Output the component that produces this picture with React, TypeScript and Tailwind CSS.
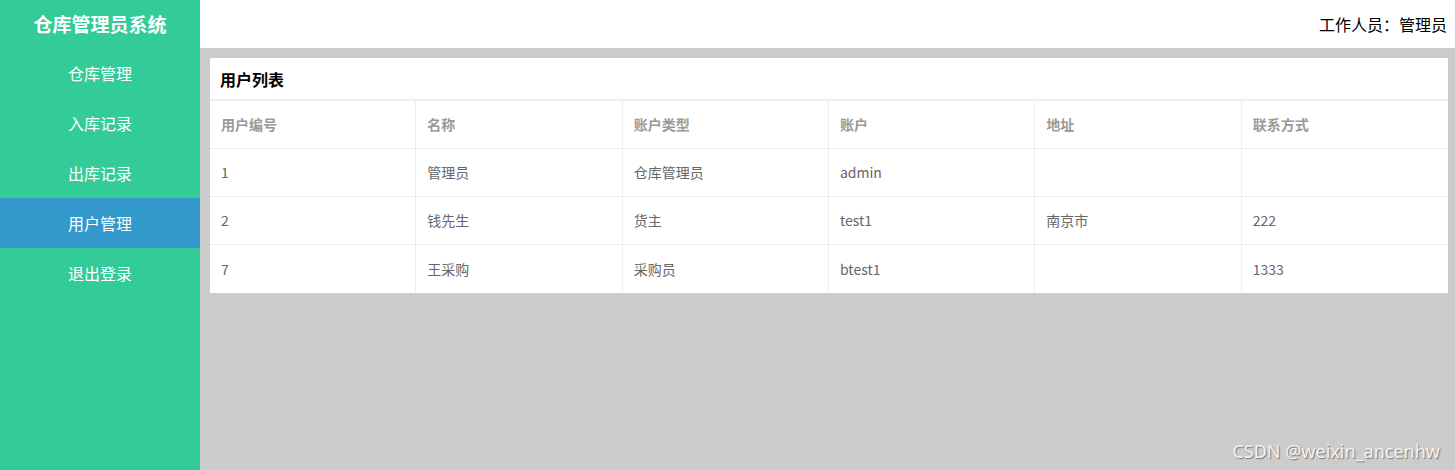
const menu = ["仓库管理", "入库记录", "出库记录", "用户管理", "退出登录"];

const columns = ["用户编号", "名称", "账户类型", "账户", "地址", "联系方式"];

const users = [
  ["1", "管理员", "仓库管理员", "admin", "", ""],
  ["2", "钱先生", "货主", "test1", "南京市", "222"],
  ["7", "王采购", "采购员", "btest1", "", "1333"],
];

const App = () => {
  return (
    <div
      className="flex h-screen relative"
      style={{ fontFamily: '"Noto Sans CJK SC", "Noto Sans", sans-serif' }}
    >
      {/* sidebar */}
      <div className="w-[200px] shrink-0 bg-[#33cc99] text-white">
        <div className="h-[48px] flex justify-center items-center text-[19px] font-bold">
          仓库管理员系统
        </div>
        {menu.map((item) => (
          <div
            key={item}
            className={
              item === "用户管理"
                ? "h-[50px] flex justify-center items-center text-[16px] bg-[#3399cc]"
                : "h-[50px] flex justify-center items-center text-[16px]"
            }
          >
            {item}
          </div>
        ))}
      </div>

      <div className="flex-1 flex flex-col">
        <div className="h-[48px] bg-white flex justify-end items-center pr-[8px] text-[16px] text-black">
          工作人员：管理员
        </div>

        <div className="flex-1 bg-[#cccccc] pt-[10px] pl-[10px] pr-[7px]">
          <div className="bg-white">
            <div className="h-[43px] flex items-center px-[10px] text-[16px] font-bold text-black border-b-2 border-[#eceef3]">
              用户列表
            </div>
            <div className="grid grid-cols-6">
              {columns.map((c, i) => (
                <div
                  key={c}
                  className={
                    i < 5
                      ? "h-[48px] flex items-center pl-[11px] text-[14px] font-bold text-[#999999] border-r border-b border-[#eceef3]"
                      : "h-[48px] flex items-center pl-[11px] text-[14px] font-bold text-[#999999] border-b border-[#eceef3]"
                  }
                >
                  {c}
                </div>
              ))}
              {users.map((row, r) =>
                row.map((cell, i) => (
                  <div
                    key={r + "-" + i}
                    className={
                      (i < 5 ? "border-r " : "") +
                      (r < 2 ? "border-b " : "") +
                      "h-[48px] flex items-center pl-[11px] text-[14px] text-[#666666] border-[#eceef3]"
                    }
                  >
                    {cell}
                  </div>
                ))
              )}
            </div>
          </div>
        </div>
      </div>

      <div
        className="absolute right-[15px] bottom-[5px] text-[18px] text-[#f2f2f2] [text-shadow:1px_1px_1px_#777]"
        style={{ fontFamily: '"Noto Sans", sans-serif' }}
      >
        CSDN @weixin_ancenhw
      </div>
    </div>
  );
};

export default App;
